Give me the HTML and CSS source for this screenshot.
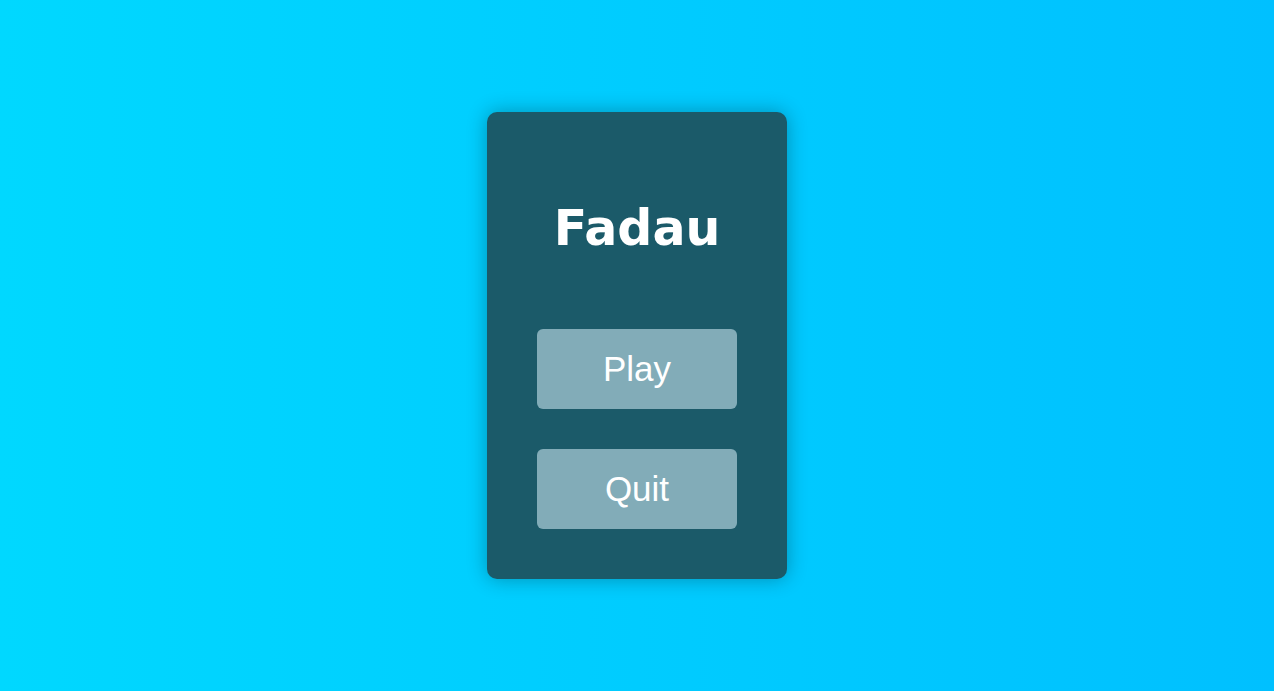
FILE: index.html
```html
<!DOCTYPE html>
<html>
<head>
<meta charset="utf-8">
<link rel="stylesheet" href="styles.css">
</head>
<body>
<div class="card">
  <h1 class="title">Fadau</h1>
  <button class="btn">Play</button>
  <button class="btn">Quit</button>
</div>
</body>
</html>
```
FILE: styles.css
```css
html, body {
  margin: 0;
  height: 100%;
}
body {
  background: linear-gradient(to right, #00d8ff, #00c0ff);
  display: flex;
  align-items: center;
  justify-content: center;
}
.card {
  width: 300px;
  height: 467px;
  box-sizing: border-box;
  padding: 50px;
  background: #1b5a69;
  border-radius: 10px;
  box-shadow: 0 0 20px rgba(0, 0, 0, 0.3);
  display: flex;
  flex-direction: column;
}
.title {
  margin: 38px 0 72px;
  font-family: "DejaVu Sans", Verdana, sans-serif;
  font-weight: bold;
  font-size: 49px;
  line-height: 57px;
  color: #ffffff;
  text-align: center;
}
.btn {
  height: 80px;
  width: 200px;
  flex: none;
  margin: 0 0 40px;
  padding: 0;
  border: none;
  border-radius: 6px;
  background: #82acb8;
  color: #ffffff;
  font-family: "Liberation Sans", Arial, sans-serif;
  font-size: 35px;
}
.btn:last-child {
  margin-bottom: 0;
}
```
